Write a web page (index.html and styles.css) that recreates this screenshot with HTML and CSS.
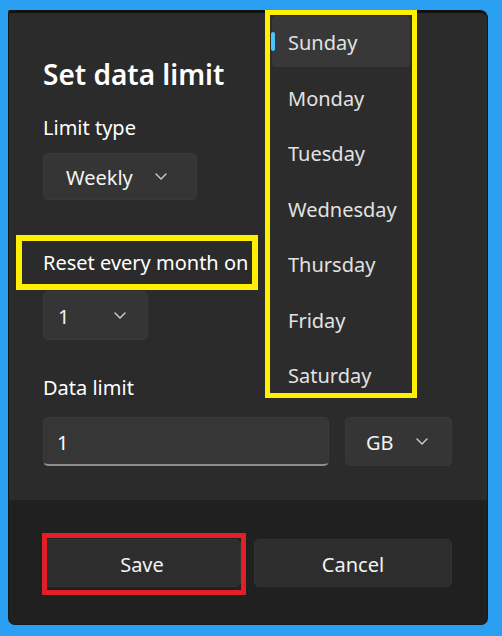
FILE: index.html
```html
<!DOCTYPE html>
<html lang="en">
<head>
<meta charset="utf-8">
<title>Set data limit</title>
<link rel="stylesheet" href="styles.css">
</head>
<body>
<div class="dialog">
  <div class="content">
    <h1 class="title">Set data limit</h1>
    <div class="label lbl-type">Limit type</div>
    <div class="combo combo-type"><span>Weekly</span><svg class="chev" viewBox="0 0 12 7" width="12" height="7"><polyline points="1,1 6,6 11,1"/></svg></div>
    <div class="label lbl-reset">Reset every month on</div>
    <div class="combo combo-day"><span>1</span><svg class="chev" viewBox="0 0 12 7" width="12" height="7"><polyline points="1,1 6,6 11,1"/></svg></div>
    <div class="label lbl-data">Data limit</div>
    <div class="row">
      <div class="textbox">1</div>
      <div class="combo combo-unit"><span>GB</span><svg class="chev" viewBox="0 0 12 7" width="12" height="7"><polyline points="1,1 6,6 11,1"/></svg></div>
    </div>
  </div>
  <div class="footer">
    <button class="btn">Save</button>
    <button class="btn">Cancel</button>
  </div>
</div>
<div class="flyout">
  <div class="item selected">Sunday</div>
  <div class="item">Monday</div>
  <div class="item">Tuesday</div>
  <div class="item">Wednesday</div>
  <div class="item">Thursday</div>
  <div class="item">Friday</div>
  <div class="item">Saturday</div>
</div>
<div class="mark mark-reset"></div>
<div class="mark mark-save"></div>
</body>
</html>
```

FILE: styles.css
```css
* { box-sizing: border-box; }
html, body { margin: 0; }
body {
  position: relative;
  height: 636px;
  overflow: hidden;
  padding: 10px 0 0 8px;
  background: #2b9ff1;
  font-family: "Noto Sans", "Open Sans", sans-serif;
  color: #f3f3f3;
}
.dialog {
  width: 480px;
  height: 615px;
  display: flex;
  flex-direction: column;
  background: #2b2b2b;
  border: 1px solid #181818;
  border-top: 3px solid #121212;
  border-radius: 2px 8px 7px 7px;
  overflow: hidden;
}
.content {
  height: 487px;
  padding: 43px 0 0 34px;
  display: flex;
  flex-direction: column;
  align-items: flex-start;
}
.title {
  margin: 0;
  font-size: 28px;
  font-weight: 600;
  line-height: 36px;
  color: #ffffff;
}
.label {
  font-size: 20px;
  line-height: 28px;
  color: #ffffff;
}
.lbl-type { margin-top: 22px; }
.lbl-reset { margin-top: 49px; }
.lbl-data { margin-top: 34px; }
.combo {
  display: flex;
  align-items: center;
  justify-content: space-between;
  height: 48px;
  background: #353535;
  border: 1px solid #393939;
  border-radius: 5px;
  font-size: 20px;
  color: #f3f3f3;
}
.combo span { padding-top: 2px; }
.chev { flex: none; }
.chev polyline {
  fill: none;
  stroke: #d0d0d0;
  stroke-width: 1.4;
  stroke-linecap: round;
  stroke-linejoin: round;
}
.combo-type {
  margin-top: 11px;
  width: 154px;
  height: 47px;
  padding: 0 29px 0 22px;
}
.combo-day {
  margin-top: 14px;
  width: 105px;
  height: 49px;
  padding: 0 21px 0 14px;
}
.row {
  margin-top: 15px;
  display: flex;
  gap: 16px;
}
.textbox {
  width: 286px;
  height: 49px;
  padding: 2px 0 0 13px;
  display: flex;
  align-items: center;
  background: #363636;
  border: 1px solid #3b3b3b;
  border-bottom: 2px solid #8e8e8e;
  border-radius: 5px;
  font-size: 20px;
  color: #ffffff;
}
.combo-unit {
  width: 107px;
  height: 49px;
  padding: 0 23px 0 20px;
}
.footer {
  flex: 1;
  background: #202020;
  display: grid;
  grid-template-columns: 198px 198px;
  gap: 13px;
  padding: 39px 0 0 34px;
  align-content: start;
}
.btn {
  height: 48px;
  padding-top: 3px;
  background: #2d2d2d;
  border: 1px solid #333333;
  border-radius: 5px;
  font-family: inherit;
  font-size: 20px;
  color: #f3f3f3;
}
.flyout {
  position: absolute;
  left: 265px;
  top: 10px;
  width: 152px;
  height: 388px;
  border: 5px solid #fff000;
  background: #2c2c2c;
  padding: 1px 2px 0 2px;
  display: flex;
  flex-direction: column;
  gap: 4.5px;
  overflow: hidden;
}
.item {
  position: relative;
  flex: none;
  height: 51px;
  line-height: 53px;
  padding-left: 16px;
  font-size: 20px;
  color: #e2e2e2;
  border-radius: 4px;
}
.item.selected { background: #383838; }
.item.selected::before {
  content: "";
  position: absolute;
  left: -1px;
  top: 16px;
  width: 4px;
  height: 19px;
  border-radius: 2px;
  background: #4cc2ff;
}
.mark {
  position: absolute;
  pointer-events: none;
}
.mark-reset {
  left: 16px;
  top: 235px;
  width: 242px;
  height: 55px;
  border: 6px solid #fff000;
}
.mark-save {
  left: 42px;
  top: 533px;
  width: 204px;
  height: 62px;
  border: 5px solid #e31e26;
}
```
